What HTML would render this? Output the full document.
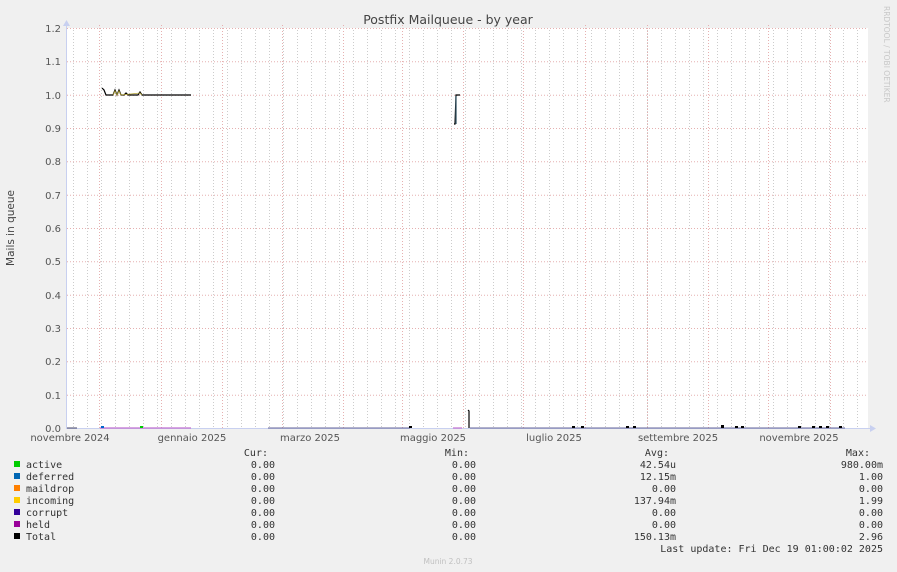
<!DOCTYPE html>
<html><head><meta charset="utf-8"><style>
html,body{margin:0;padding:0;background:#f0f0f0;width:897px;height:572px;overflow:hidden}
svg text{font-family:"DejaVu Sans","Liberation Sans",sans-serif}
svg .m text{font-family:"DejaVu Sans Mono","Liberation Mono",monospace;font-size:10px;fill:#333}
</style></head><body>
<svg width="897" height="572" xmlns="http://www.w3.org/2000/svg">
<defs>
<pattern id="vg" x="73" y="0" width="14" height="572" patternUnits="userSpaceOnUse">
<line x1="0.5" y1="0" x2="0.5" y2="572" stroke="#cccccc" stroke-dasharray="1,2"/>
</pattern>
</defs>
<rect x="67" y="28" width="801" height="400" fill="#fff"/>
<rect x="67" y="28" width="801" height="400" fill="url(#vg)"/>
<g stroke="#e6b0b0" stroke-dasharray="1,2">
<line x1="67" x2="868" y1="28.5" y2="28.5"/><line x1="67" x2="868" y1="61.8" y2="61.8"/>
<line x1="67" x2="868" y1="95.2" y2="95.2"/><line x1="67" x2="868" y1="128.5" y2="128.5"/>
<line x1="67" x2="868" y1="161.8" y2="161.8"/><line x1="67" x2="868" y1="195.2" y2="195.2"/>
<line x1="67" x2="868" y1="228.5" y2="228.5"/><line x1="67" x2="868" y1="261.8" y2="261.8"/>
<line x1="67" x2="868" y1="295.2" y2="295.2"/><line x1="67" x2="868" y1="328.5" y2="328.5"/>
<line x1="67" x2="868" y1="361.8" y2="361.8"/><line x1="67" x2="868" y1="395.2" y2="395.2"/>
<line y1="25" y2="428" x1="99.5" x2="99.5"/><line y1="25" y2="428" x1="161.5" x2="161.5"/>
<line y1="25" y2="428" x1="222.5" x2="222.5"/><line y1="25" y2="428" x1="282.5" x2="282.5"/>
<line y1="25" y2="428" x1="343.5" x2="343.5"/><line y1="25" y2="428" x1="402.5" x2="402.5"/>
<line y1="25" y2="428" x1="463.5" x2="463.5"/><line y1="25" y2="428" x1="523.5" x2="523.5"/>
<line y1="25" y2="428" x1="585.5" x2="585.5"/><line y1="25" y2="428" x1="647.5" x2="647.5"/>
<line y1="25" y2="428" x1="708.5" x2="708.5"/><line y1="25" y2="428" x1="768.5" x2="768.5"/>
<line y1="25" y2="428" x1="830.5" x2="830.5"/>
</g>
<line x1="66.5" y1="24" x2="66.5" y2="429" stroke="#c8d0f0"/>
<line x1="66" y1="428.5" x2="872" y2="428.5" stroke="#c8d0f0"/>
<polygon points="63,26 70,26 66.5,20" fill="#c8d0f0"/>
<polygon points="870,425 870,432 876,428.5" fill="#c8d0f0"/>
<polyline fill="none" stroke="#000" stroke-width="1.2" points="102,88 104,90 106,95 113,95 115,90 117,95 119,90 121,95 124,95 126,93 128,95 138,95 140,92 142,95 191,95"/>
<polyline fill="none" stroke="#b0a030" stroke-width="0.8" points="113,95 115,91 117,95 119,91 121,95 140,93 142,95"/>
<polyline fill="none" stroke="#000" stroke-width="1.2" points="454,124 455,124 456,95 460,95"/>
<line x1="456" y1="96" x2="456" y2="124" stroke="#3a5a6a" stroke-width="1.3"/>
<polyline fill="none" stroke="#000" stroke-width="1.2" points="468,410 469,411 469,428"/>
<line x1="100" y1="428" x2="191" y2="428" stroke="#c070d0" stroke-width="1.2"/>
<line x1="67" y1="428" x2="77" y2="428" stroke="#446" stroke-width="1"/>
<line x1="268" y1="428" x2="410" y2="428" stroke="#669" stroke-width="1"/>
<line x1="453" y1="428" x2="462" y2="428" stroke="#c070d0" stroke-width="1.2"/>
<line x1="470" y1="428" x2="845" y2="428" stroke="#669" stroke-width="1"/>
<g fill="#000"><rect x="409" y="426" width="3" height="2"/><rect x="572" y="426" width="3" height="2"/><rect x="581" y="426" width="3" height="2"/><rect x="626" y="426" width="3" height="2"/><rect x="633" y="426" width="3" height="2"/><rect x="721" y="425" width="3" height="3"/><rect x="735" y="426" width="3" height="2"/><rect x="741" y="426" width="3" height="2"/><rect x="798" y="426" width="3" height="2"/><rect x="812" y="426" width="3" height="2"/><rect x="819" y="426" width="3" height="2"/><rect x="826" y="426" width="3" height="2"/><rect x="839" y="426" width="3" height="2"/><rect x="101" y="426" width="3" height="2" fill="#06c"/><rect x="140" y="426" width="3" height="2" fill="#0c0"/></g>
<g font-size="10" fill="#555" text-anchor="end">
<text x="61" y="32">1.2</text><text x="61" y="65">1.1</text><text x="61" y="99">1.0</text>
<text x="61" y="132">0.9</text><text x="61" y="165">0.8</text><text x="61" y="199">0.7</text>
<text x="61" y="232">0.6</text><text x="61" y="265">0.5</text><text x="61" y="299">0.4</text>
<text x="61" y="332">0.3</text><text x="61" y="365">0.2</text><text x="61" y="399">0.1</text>
<text x="61" y="432">0.0</text>
</g>
<g font-size="10" fill="#555" text-anchor="middle">
<text x="70" y="441">novembre 2024</text><text x="192" y="441">gennaio 2025</text>
<text x="310" y="441">marzo 2025</text><text x="433" y="441">maggio 2025</text>
<text x="554" y="441">luglio 2025</text><text x="678" y="441">settembre 2025</text>
<text x="799" y="441">novembre 2025</text>
</g>
<text x="448" y="24" font-size="12.5" fill="#444" text-anchor="middle">Postfix Mailqueue - by year</text>
<text transform="translate(14,228) rotate(-90)" font-size="10.5" fill="#444" text-anchor="middle">Mails in queue</text>
<text transform="translate(884,6) rotate(90)" font-size="7.5" fill="#c8c8c8">RRDTOOL / TOBI OETIKER</text>
<rect x="14" y="461" width="6" height="6" fill="#00cc00"/>
<rect x="14" y="473" width="6" height="6" fill="#0066b3"/>
<rect x="14" y="485" width="6" height="6" fill="#ff8000"/>
<rect x="14" y="497" width="6" height="6" fill="#ffcc00"/>
<rect x="14" y="509" width="6" height="6" fill="#330099"/>
<rect x="14" y="521" width="6" height="6" fill="#990099"/>
<rect x="14" y="533" width="6" height="6" fill="#000"/>
<g class="m">
<text x="26" y="468">active</text><text x="26" y="480">deferred</text><text x="26" y="492">maildrop</text>
<text x="26" y="504">incoming</text><text x="26" y="516">corrupt</text><text x="26" y="528">held</text><text x="26" y="540">Total</text>
</g>
<g class="m" text-anchor="end">
<text x="268" y="456">Cur:</text><text x="469" y="456">Min:</text><text x="669" y="456">Avg:</text><text x="870" y="456">Max:</text>
<text x="275" y="468">0.00</text><text x="476" y="468">0.00</text><text x="676" y="468">42.54u</text><text x="883" y="468">980.00m</text>
<text x="275" y="480">0.00</text><text x="476" y="480">0.00</text><text x="676" y="480">12.15m</text><text x="883" y="480">1.00</text>
<text x="275" y="492">0.00</text><text x="476" y="492">0.00</text><text x="676" y="492">0.00</text><text x="883" y="492">0.00</text>
<text x="275" y="504">0.00</text><text x="476" y="504">0.00</text><text x="676" y="504">137.94m</text><text x="883" y="504">1.99</text>
<text x="275" y="516">0.00</text><text x="476" y="516">0.00</text><text x="676" y="516">0.00</text><text x="883" y="516">0.00</text>
<text x="275" y="528">0.00</text><text x="476" y="528">0.00</text><text x="676" y="528">0.00</text><text x="883" y="528">0.00</text>
<text x="275" y="540">0.00</text><text x="476" y="540">0.00</text><text x="676" y="540">150.13m</text><text x="883" y="540">2.96</text>
<text x="883" y="552">Last update: Fri Dec 19 01:00:02 2025</text>
</g>
<text x="448" y="564" font-size="7.5" fill="#c0c0c0" text-anchor="middle">Munin 2.0.73</text>
</svg>
</body></html>
